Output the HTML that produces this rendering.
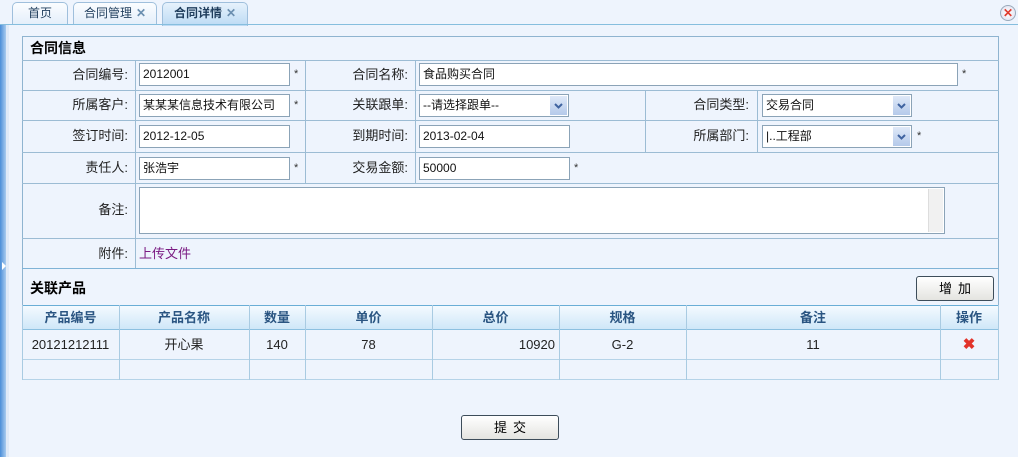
<!DOCTYPE html>
<html><head><meta charset="utf-8"><style>
*{margin:0;padding:0;box-sizing:border-box}
body{width:1018px;height:457px;overflow:hidden;background:#eef4fd;font-family:"Liberation Sans","Noto Sans CJK SC",sans-serif;font-size:13px;color:#000;position:relative}
.a{position:absolute}
.tab{position:absolute;top:2px;height:23px;border:1px solid #9fbfdc;border-bottom:none;border-radius:5px 5px 0 0;background:linear-gradient(#fbfdff,#e3eefa);font-size:12px;color:#1f3d5c;line-height:20px;text-align:center}
.tab.on{background:linear-gradient(#e6f2fc,#bcdaf4);font-weight:bold;height:24px}
.x{color:#6b8fb0;font-weight:bold;margin-left:4px}
.hl{position:absolute;height:1px;background:#9cbcd4}
.vl{position:absolute;width:1px;background:#9cbcd4}
.lb{position:absolute;text-align:right;line-height:28px;color:#222}
.in{position:absolute;height:23px;border:1px solid #8ba3b7;background:#fff;line-height:21px;padding-left:3px;font-size:12px;color:#111;white-space:nowrap;overflow:hidden}
.star{position:absolute;font-size:11px;color:#333}
.sel .ar{position:absolute;right:1px;top:1px;width:17px;height:19px;background:linear-gradient(#dfe9f8,#b4c9ea)}
.th{position:absolute;top:306px;height:23px;line-height:23px;text-align:center;font-weight:bold;color:#2a5582;font-size:13px}
.td{position:absolute;top:330px;height:29px;line-height:29px;text-align:center;font-size:13px;color:#222}
.btn{position:absolute;border:1px solid #3d4d5a;border-radius:3px;background:linear-gradient(#fff,#e4e4e0);text-align:center;font-size:13px;letter-spacing:6px;text-indent:6px}
</style></head><body>
<div class="tab" style="left:12px;width:56px;">首页</div>
<div class="tab" style="left:73px;width:84px;">合同管理<span class="x">✕</span></div>
<div class="tab on" style="left:162px;width:86px;">合同详情<span class="x">✕</span></div>
<div class="hl" style="left:0;top:24px;width:1018px;background:#86bede"></div>
<div class="a" style="left:1000px;top:5px;width:16px;height:16px;border-radius:50%;border:1px solid #9ab;background:radial-gradient(#fff,#dde);color:#e03a2c;font-size:12px;font-weight:bold;line-height:14px;text-align:center">✕</div>
<div class="a" style="left:0;top:25px;width:6px;height:432px;background:linear-gradient(90deg,#4a8ed8,#a9cbef)"></div>
<div class="a" style="left:6px;top:25px;width:3px;height:432px;background:#dfeaf8"></div>
<div class="a" style="left:2px;top:262px;width:0;height:0;border-left:4px solid #fff;border-top:4px solid transparent;border-bottom:4px solid transparent"></div>
<div class="a" style="left:22px;top:36px;width:977px;height:344px;border:1px solid #8fb4d0;border-bottom:none"></div>
<div class="a" style="left:30px;top:38px;font-weight:bold;font-size:14px;line-height:20px">合同信息</div>
<div class="hl" style="left:22px;top:60px;width:977px"></div>
<div class="hl" style="left:22px;top:90px;width:977px"></div>
<div class="hl" style="left:22px;top:120px;width:977px"></div>
<div class="hl" style="left:22px;top:152px;width:977px"></div>
<div class="hl" style="left:22px;top:183px;width:977px"></div>
<div class="hl" style="left:22px;top:238px;width:977px"></div>
<div class="hl" style="left:22px;top:268px;width:977px;background:#7fb3d6"></div>
<div class="vl" style="left:135px;top:60px;height:208px"></div>
<div class="vl" style="left:305px;top:60px;height:123px"></div>
<div class="vl" style="left:415px;top:60px;height:123px"></div>
<div class="vl" style="left:645px;top:90px;height:62px"></div>
<div class="vl" style="left:757px;top:90px;height:62px"></div>
<div class="lb" style="left:22px;top:61px;width:106px">合同编号:</div>
<div class="lb" style="left:22px;top:91px;width:106px">所属客户:</div>
<div class="lb" style="left:22px;top:122px;width:106px">签订时间:</div>
<div class="lb" style="left:22px;top:154px;width:106px">责任人:</div>
<div class="lb" style="left:22px;top:196px;width:106px">备注:</div>
<div class="lb" style="left:22px;top:240px;width:106px">附件:</div>
<div class="lb" style="left:305px;top:61px;width:103px">合同名称:</div>
<div class="lb" style="left:305px;top:91px;width:103px">关联跟单:</div>
<div class="lb" style="left:305px;top:122px;width:103px">到期时间:</div>
<div class="lb" style="left:305px;top:154px;width:103px">交易金额:</div>
<div class="lb" style="left:645px;top:91px;width:104px">合同类型:</div>
<div class="lb" style="left:645px;top:122px;width:104px">所属部门:</div>
<div class="in" style="left:139px;top:63px;width:151px">2012001</div><div class="star" style="left:294px;top:68px">*</div>
<div class="in" style="left:139px;top:94px;width:151px">某某某信息技术有限公司</div><div class="star" style="left:294px;top:99px">*</div>
<div class="in" style="left:139px;top:125px;width:151px">2012-12-05</div>
<div class="in" style="left:139px;top:157px;width:151px">张浩宇</div><div class="star" style="left:294px;top:162px">*</div>
<div class="in" style="left:419px;top:63px;width:539px">食品购买合同</div><div class="star" style="left:962px;top:68px">*</div>
<div class="in sel" style="left:419px;top:94px;width:150px">--请选择跟单--<div class="ar"><svg width="17" height="19"><path d="M5 8l3.5 3.5L12 8" stroke="#3f63a0" stroke-width="2" fill="none"/></svg></div></div>
<div class="in" style="left:419px;top:125px;width:151px">2013-02-04</div>
<div class="in" style="left:419px;top:157px;width:151px">50000</div><div class="star" style="left:574px;top:162px">*</div>
<div class="in sel" style="left:762px;top:94px;width:150px">交易合同<div class="ar"><svg width="17" height="19"><path d="M5 8l3.5 3.5L12 8" stroke="#3f63a0" stroke-width="2" fill="none"/></svg></div></div>
<div class="in sel" style="left:762px;top:125px;width:150px">|..工程部<div class="ar"><svg width="17" height="19"><path d="M5 8l3.5 3.5L12 8" stroke="#3f63a0" stroke-width="2" fill="none"/></svg></div></div><div class="star" style="left:917px;top:130px">*</div>
<div class="in" style="left:139px;top:187px;width:806px;height:47px"><div class="a" style="right:1px;top:1px;width:15px;height:43px;background:#f1f1f1;border-left:1px solid #ddd"></div></div>
<div class="a" style="left:139px;top:239px;line-height:30px;color:#7a1a82">上传文件</div>
<div class="a" style="left:30px;top:278px;font-weight:bold;font-size:14px;line-height:20px">关联产品</div>
<div class="btn" style="left:916px;top:276px;width:78px;height:25px;line-height:23px">增加</div>
<div class="a" style="left:22px;top:305px;width:977px;height:25px;background:linear-gradient(#f4faff,#cfe7f8);border-top:1px solid #6aaed6;border-bottom:1px solid #8cc0e0"></div>
<div class="hl" style="left:22px;top:359px;width:977px;background:#b5d3e8"></div>
<div class="hl" style="left:22px;top:379px;width:977px;background:#b5d3e8"></div>
<div class="vl" style="left:22px;top:305px;height:75px;background:#a9cbe2"></div>
<div class="vl" style="left:119px;top:305px;height:75px;background:#a9cbe2"></div>
<div class="vl" style="left:249px;top:305px;height:75px;background:#a9cbe2"></div>
<div class="vl" style="left:305px;top:305px;height:75px;background:#a9cbe2"></div>
<div class="vl" style="left:432px;top:305px;height:75px;background:#a9cbe2"></div>
<div class="vl" style="left:559px;top:305px;height:75px;background:#a9cbe2"></div>
<div class="vl" style="left:686px;top:305px;height:75px;background:#a9cbe2"></div>
<div class="vl" style="left:940px;top:305px;height:75px;background:#a9cbe2"></div>
<div class="vl" style="left:998px;top:305px;height:75px;background:#a9cbe2"></div>
<div class="th" style="left:22px;width:97px">产品编号</div>
<div class="th" style="left:119px;width:130px">产品名称</div>
<div class="th" style="left:249px;width:56px">数量</div>
<div class="th" style="left:305px;width:127px">单价</div>
<div class="th" style="left:432px;width:127px">总价</div>
<div class="th" style="left:559px;width:127px">规格</div>
<div class="th" style="left:686px;width:254px">备注</div>
<div class="th" style="left:940px;width:58px">操作</div>
<div class="td" style="left:22px;width:97px">20121212111</div>
<div class="td" style="left:119px;width:130px">开心果</div>
<div class="td" style="left:249px;width:56px">140</div>
<div class="td" style="left:305px;width:127px">78</div>
<div class="td" style="left:432px;width:123px;text-align:right">10920</div>
<div class="td" style="left:559px;width:127px">G-2</div>
<div class="td" style="left:686px;width:254px">11</div>
<div class="td" style="left:940px;width:58px;color:#e2332a;font-weight:bold;font-size:15px">✖</div>
<div class="btn" style="left:461px;top:415px;width:98px;height:25px;line-height:23px">提交</div>
</body></html>
